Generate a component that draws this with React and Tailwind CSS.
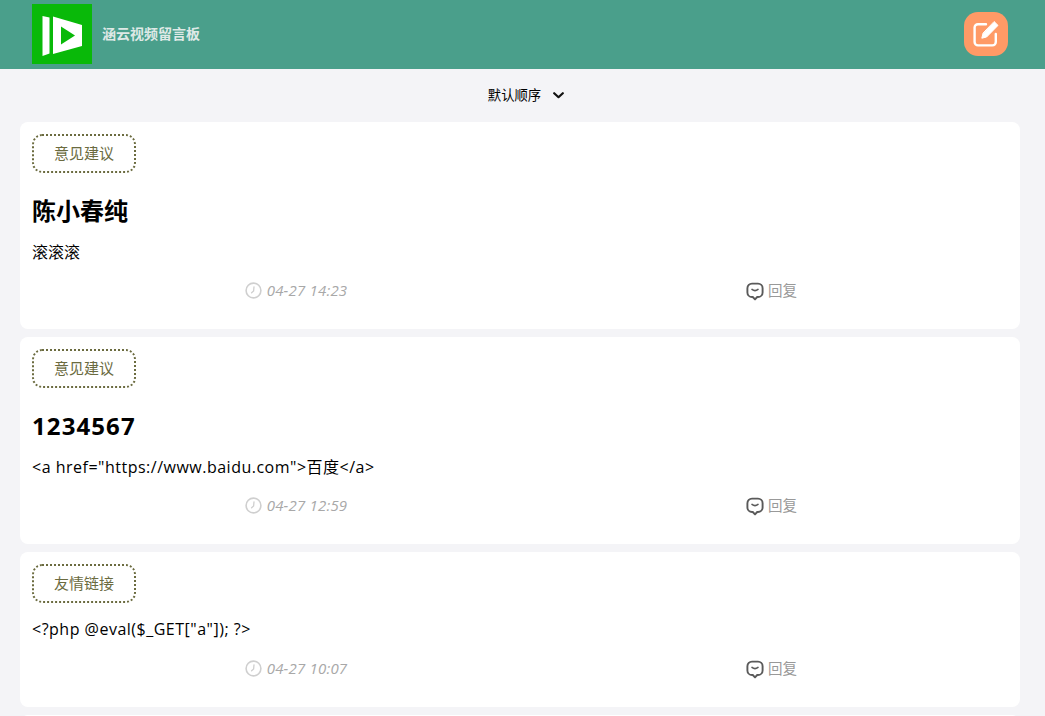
const font = { fontFamily: '"Open Sans", "Noto Sans CJK SC", sans-serif' };

function ClockIcon() {
  return (
    <svg width="17" height="17" viewBox="0 0 17 17" fill="none" stroke="#cfcfcf" strokeWidth="1.6" strokeLinecap="round">
      <circle cx="8.5" cy="8.5" r="7.4" />
      <path d="M9 4.8 L8.6 9 L6.6 10.8" strokeWidth="1.3" />
    </svg>
  );
}

function ReplyIcon() {
  return (
    <svg width="18" height="19" viewBox="0 0 18 19" fill="none" stroke="#5a5a5a" strokeWidth="1.9" strokeLinecap="round" strokeLinejoin="round">
      <path d="M6 1.6 H12 A4.6 4.6 0 0 1 16.6 6.2 V10.4 A4.6 4.6 0 0 1 12 15 H11.2 L9 17.4 L6.8 15 H6 A4.6 4.6 0 0 1 1.4 10.4 V6.2 A4.6 4.6 0 0 1 6 1.6 Z" />
      <path d="M6 7.4 Q9 9.8 12 7.4" strokeWidth="1.6" />
    </svg>
  );
}

function Logo() {
  return (
    <div className="w-[60px] h-[60px] bg-[#09b909] shrink-0 flex items-center justify-center">
      <svg width="60" height="60" viewBox="0 0 60 60">
        <path d="M10.5 12 L17.5 13.5 L17.5 49.5 L10.5 52 Z" fill="#fff" />
        <path d="M21 12.5 L50 21 L50 42 L21 50 Z" fill="#fff" />
        <path d="M29 22.5 L43 31.5 L29 40.5 Z" fill="#09b909" />
      </svg>
    </div>
  );
}

function EditIcon() {
  return (
    <svg width="28" height="28" viewBox="0 0 28 28" fill="none" stroke="#fff" strokeWidth="2.4" strokeLinecap="round" strokeLinejoin="round">
      <path d="M14 4.2 H6 A3.4 3.4 0 0 0 2.6 7.6 V22 A3.4 3.4 0 0 0 6 25.4 H20.4 A3.4 3.4 0 0 0 23.8 22 V14" />
      <path d="M22.4 1.8 L26 5.4 L14.6 17 L9.8 18.2 L11 13.4 Z" fill="#fff" strokeWidth="1" />
    </svg>
  );
}

function Card({ tag, title, body, time, latin }) {
  return (
    <div className="bg-white rounded-lg px-3 pt-3 pb-[27px] shrink-0">
      <div className="w-[104px] h-[39px] border-2 border-dotted border-[#6b6b3f] rounded-[10px] flex items-center justify-center text-[15px] text-[#6b6b3f]">
        {tag}
      </div>
      {title && (
        <div className={`mt-[19px] h-[38px] flex items-center text-[24px] leading-[38px] font-bold text-black ${latin ? "tracking-[1.1px]" : ""}`}>{title}</div>
      )}
      <div className={`${title ? "mt-[10px]" : "mt-[14px]"} h-[24px] text-[16px] leading-[24px] text-black ${latin || !title ? "tracking-[0.5px]" : ""}`}>{body}</div>
      <div className={`${title ? "mt-[14px]" : "mt-[15px]"} flex items-center h-[24px] -mx-3`}>
        <div className="w-1/2 flex items-center justify-center pl-[52px] gap-[5px]">
          <ClockIcon />
          <span className="text-[15px] italic text-[#a8a8a8] tracking-[0.2px]">{time}</span>
        </div>
        <div className="w-1/2 flex items-center justify-center pl-[3px] pt-[2px] gap-1">
          <ReplyIcon />
          <span className="text-[14.5px] text-[#999]">回复</span>
        </div>
      </div>
    </div>
  );
}

export default function App() {
  return (
    <div style={font} className="h-screen overflow-hidden bg-[#f4f4f7] flex flex-col">
      <header className="h-[69px] shrink-0 bg-[#4a9f8b] flex items-start pl-8 pr-[37px] pt-1">
        <Logo />
        <span className="ml-[10px] h-[58px] flex items-center text-[14px] font-bold text-[#dfe9e6]">涵云视频留言板</span>
        <div className="ml-auto w-11 h-11 mt-[8px] rounded-[14px] bg-[#ff9a66] flex items-center justify-center">
          <EditIcon />
        </div>
      </header>
      <div className="h-[53px] shrink-0 flex items-center justify-center gap-[12px] text-[13.33px] text-black pl-[7px]">
        <span>默认顺序</span>
        <svg width="11" height="7" viewBox="0 0 11 7" fill="none" stroke="#111" strokeWidth="2.2" strokeLinecap="round" strokeLinejoin="round">
          <path d="M1.2 1.2 L5.5 5.2 L9.8 1.2" />
        </svg>
      </div>
      <main className="ml-5 mr-[25px] flex flex-col gap-2">
        <Card tag="意见建议" title="陈小春纯" body="滚滚滚" time="04-27 14:23" />
        <Card latin tag="意见建议" title="1234567" body={'<a href="https://www.baidu.com">百度</a>'} time="04-27 12:59" />
        <Card tag="友情链接" body={'<?php @eval($_GET["a"]); ?>'} time="04-27 10:07" />
        <div className="bg-white rounded-lg h-[60px] shrink-0" />
      </main>
    </div>
  );
}
